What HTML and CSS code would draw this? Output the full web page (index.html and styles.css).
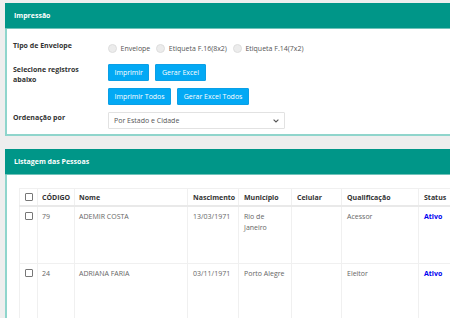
FILE: index.html
```html
<!DOCTYPE html>
<html lang="pt">
<head>
<meta charset="utf-8">
<title>Impressão</title>
<link rel="stylesheet" href="styles.css">
</head>
<body>
<section class="panel">
  <header class="panel-head">Impressão</header>
  <div class="panel-body form-body">
    <div class="form-grid">
      <div class="lbl">Tipo de Envelope</div>
      <div class="radios">
        <label class="radio"><span class="dot"></span>Envelope</label>
        <label class="radio"><span class="dot"></span>Etiqueta F.16(8x2)</label>
        <label class="radio"><span class="dot"></span>Etiqueta F.14(7x2)</label>
      </div>
      <div class="lbl">Selecione registros<br>abaixo</div>
      <div class="btn-rows">
        <div class="btn-row">
          <button class="btn">Imprimir</button>
          <button class="btn">Gerar Excel</button>
        </div>
        <div class="btn-row">
          <button class="btn">Imprimir Todos</button>
          <button class="btn">Gerar Excel Todos</button>
        </div>
      </div>
      <div class="lbl">Ordenação por</div>
      <div class="select-wrap">
        <select class="select"><option>Por Estado e Cidade</option></select>
        <svg class="chev" width="6" height="4" viewBox="0 0 6 4"><path d="M0.6 0.6 L3 3 L5.4 0.6" fill="none" stroke="#555" stroke-width="1.1"/></svg>
      </div>
    </div>
  </div>
</section>

<section class="panel panel-second">
  <header class="panel-head">Listagem das Pessoas</header>
  <div class="panel-body list-body">
    <table class="tbl">
      <colgroup>
        <col class="c-chk"><col class="c-cod"><col class="c-nome"><col class="c-nasc"><col class="c-mun"><col class="c-cel"><col class="c-qual"><col class="c-stat">
      </colgroup>
      <thead>
        <tr>
          <th><span class="chk"></span></th>
          <th>CÓDIGO</th>
          <th>Nome</th>
          <th>Nascimento</th>
          <th>Município</th>
          <th>Celular</th>
          <th>Qualificação</th>
          <th>Status</th>
        </tr>
      </thead>
      <tbody>
        <tr>
          <td><span class="chk"></span></td>
          <td>79</td>
          <td>ADEMIR COSTA</td>
          <td>13/03/1971</td>
          <td>Rio de Janeiro</td>
          <td></td>
          <td>Acessor</td>
          <td class="ativo">Ativo</td>
        </tr>
        <tr>
          <td><span class="chk"></span></td>
          <td>24</td>
          <td>ADRIANA FARIA</td>
          <td>03/11/1971</td>
          <td>Porto Alegre</td>
          <td></td>
          <td>Eleitor</td>
          <td class="ativo">Ativo</td>
        </tr>
      </tbody>
    </table>
  </div>
</section>
</body>
</html>
```

FILE: styles.css
```css
html, body {
  margin: 0;
  padding: 0;
}
body {
  background: #eeeeee;
  font-family: "Open Sans", "Noto Sans", sans-serif;
  font-size: 7px;
  color: #555;
  width: 450px;
  height: 318px;
  overflow: hidden;
  padding: 3px 0 0 5px;
  box-sizing: border-box;
}
.panel {
  width: 470px;
  background: #fff;
}
.panel-second {
  margin-top: 13px;
}
.panel-head {
  background: #009688;
  color: #fff;
  font-weight: 700;
  height: 25px;
  line-height: 25px;
  padding-left: 9px;
  border-bottom: 1px solid #6fc2b9;
}
.panel-body {
  border-left: 2px solid #8fd5cc;
  border-bottom: 2px solid #8fd5cc;
}
.form-body {
  padding: 11px 0 5px 6px;
}
.form-grid {
  display: grid;
  grid-template-columns: 95px auto;
  row-gap: 7px;
  justify-content: start;
}
.lbl {
  font-weight: 700;
  color: #333;
  line-height: 10px;
  padding-top: 1px;
}
.radios {
  display: flex;
  align-items: center;
  height: 17px;
  gap: 6px;
}
.radio {
  display: flex;
  align-items: center;
  gap: 3.5px;
  color: #555;
}
.dot {
  width: 7px;
  height: 7px;
  border-radius: 50%;
  background: #ececec;
  border: 1px solid #dedede;
  display: inline-block;
}
.btn-rows {
  display: flex;
  flex-direction: column;
  gap: 7px;
}
.btn-row {
  display: flex;
  gap: 6px;
}
.btn {
  font-family: inherit;
  font-size: 7px;
  height: 17px;
  padding: 0 5.5px;
  background: #03a9f4;
  color: #fff;
  border: 1px solid #0b9fe6;
  border-radius: 1px;
  line-height: 15px;
}
.select-wrap {
  position: relative;
  width: 177px;
  height: 17px;
}
.select {
  appearance: none;
  -webkit-appearance: none;
  width: 177px;
  height: 17px;
  font-family: inherit;
  font-size: 7px;
  color: #555;
  background: #fff;
  border: 1px solid #e2e2e2;
  border-radius: 1px;
  padding: 0 0 0 5px;
  margin: 0;
}
.chev {
  position: absolute;
  right: 6px;
  top: 7px;
}
.list-body {
  padding: 13px 0 40px 12px;
}
.tbl {
  table-layout: fixed;
  border-collapse: collapse;
  width: 452px;
}
.c-chk { width: 18px; }
.c-cod { width: 37px; }
.c-nome { width: 113px; }
.c-nasc { width: 51px; }
.c-mun { width: 53px; }
.c-cel { width: 50px; }
.c-qual { width: 77px; }
.c-stat { width: 53px; }
.tbl th, .tbl td {
  border: 1px solid #f0f0f0;
  text-align: left;
  vertical-align: top;
  line-height: 11px;
}
.tbl th {
  font-weight: 700;
  color: #333;
  height: 17px;
  padding: 3px 4px 0;
  box-sizing: border-box;
  border-bottom: 2px solid #e9e9e9;
}
.tbl td {
  color: #666;
  padding: 4px 4px 0;
  height: 58px;
  box-sizing: border-box;
}
.tbl th:nth-child(n+4), .tbl td:nth-child(n+4) {
  padding-left: 5px;
}
.tbl th:first-child, .tbl td:first-child {
  padding-left: 5px;
  padding-right: 0;
}
.chk {
  display: inline-block;
  width: 6px;
  height: 6px;
  border: 1px solid #777;
  border-radius: 1px;
  vertical-align: middle;
  margin-top: -2px;
}
.ativo {
  color: #0000f0 !important;
  font-weight: 700;
}
```
